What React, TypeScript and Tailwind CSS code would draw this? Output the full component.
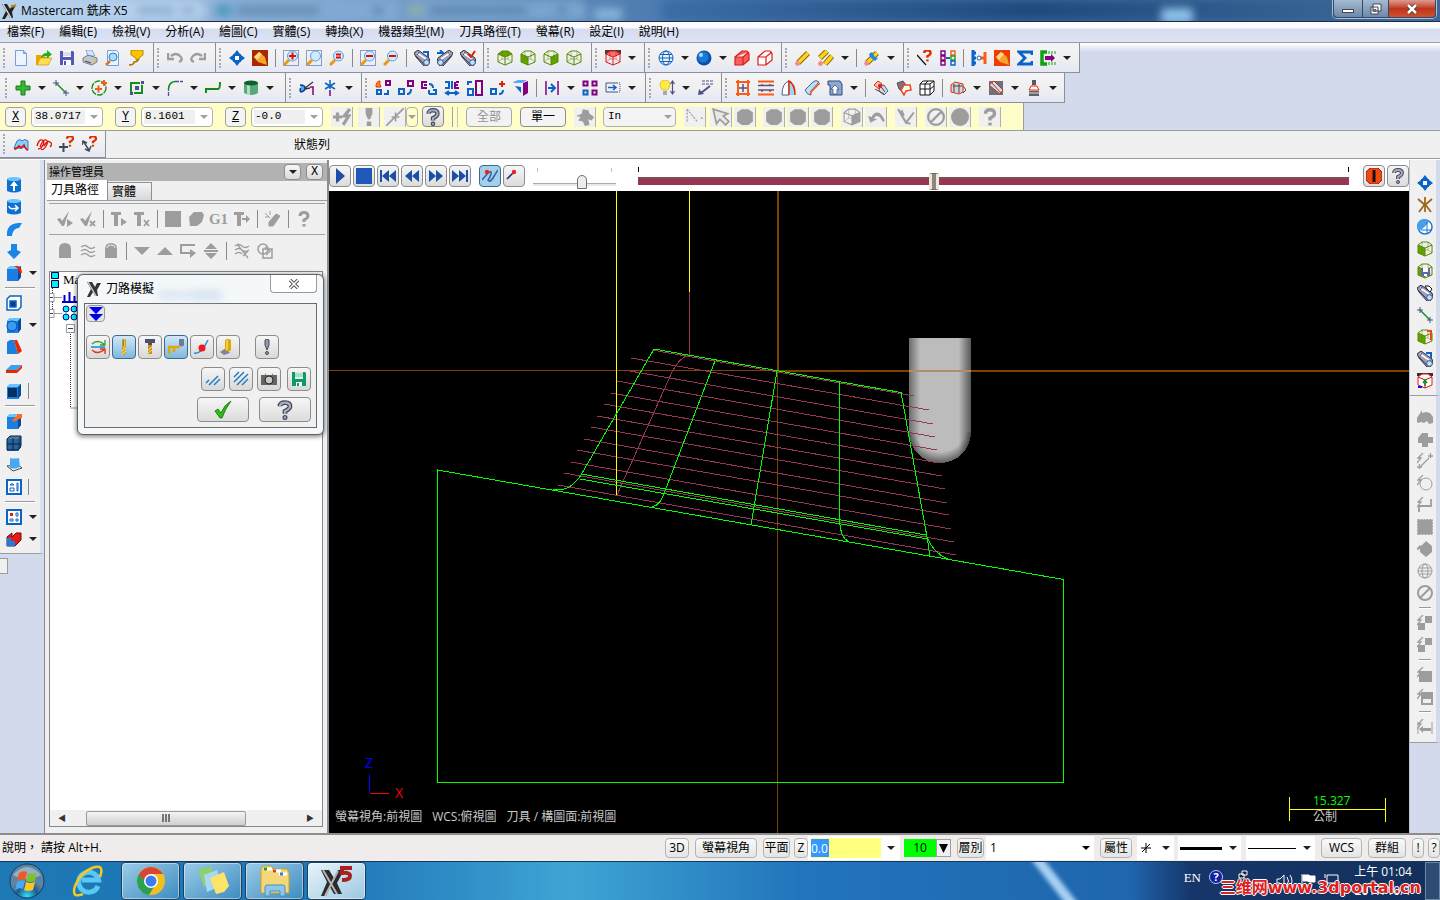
import type { ReactNode } from "react"

import { useState } from "react"
import clsx from "clsx"

const GRAY = "#9d9d9d"
const BLUE = "#0a64c8"
const PURPLE = "#800080"
const ORANGE = "#ff5a14"

const cube = "M1 4l4-3h6l4 3v8l-7 3-7-3zM1 4l7 3 7-3M8 7v8"

const Cube = ({ color = "#5a8a00", fill = "", face = "" }) => (
  <>
    {face && <path d={face} fill={fill || "#62a300"} />}
    <path d={cube} fill="none" stroke={color} strokeWidth="1" />
    <path d="M5 1v8l-4 3M5 9l6 0 4 3M11 1v8" fill="none" stroke={color} strokeWidth="0.5" />
  </>
)

const Lens = ({ color = "#e01000", sign = "", dashed = false }) => (
  <>
    {dashed && <path d="M.5.5h15v15H.5z" fill="none" stroke="#1848b0" strokeDasharray="1 1" />}
    <path d="M1 15l5-5" stroke="#e89a10" strokeWidth="3" />
    <circle cx="9.5" cy="6" r="5" fill="#cfeaff" stroke="#5aa0d8" />
    <path d={sign} stroke={color} strokeWidth="2" />
  </>
)

const Spyglass = ({ mark }: { mark?: ReactNode }) => (
  <>
    <path d="M0 3l4-3 11 8 1 4-3 4h-3L2 7z" fill="#9a9eb8" stroke="#2c2f40" />
    <path d="M3 3l9 6" stroke="#fff" strokeWidth="1.600" />
    <path d="M2 6l8 8M5 2L3 5" stroke="#44485c" />
    <circle cx="12.500" cy="12.500" r="2.800" fill="#bfe2ff" stroke="#3d5a86" />
    {mark}
  </>
)

const Solid = ({ children }: { children?: ReactNode }) => (
  <>
    <path d="M1 4l3-3h11v11l-3 4H1z" fill="#1a7fe0" />
    <path d="M1 4l3-3h11l-3 3z" fill="#6cc4ff" />
    <path d="M12 4l3-3v11l-3 4z" fill="#0a4a9c" />
    {children}
  </>
)

const Bolt = () => <path d="M6 0L1 5h3L0 10" fill="none" stroke={GRAY} strokeWidth="1.3" />

const Help = ({ color = "#e03000" }) => (
  <>
    <path d="M4 5q0-3.500 4-3.500t4 3.500q0 2-4 4v2" fill="none" stroke={color} strokeWidth="3" />
    <path d="M6.500 13h3v2.500h-3z" fill={color} />
  </>
)

const Pencil = ({ d = "M3 13L13 3" }) => (
  <>
    <path d={d} stroke="#8a6400" strokeWidth="5.500" />
    <path d={d} stroke="#ffd21e" strokeWidth="3.500" />
    <path d="M1 15l3-3" stroke="#f58a8a" strokeWidth="4" />
  </>
)

const Move = () => (
  <>
    <path d="M8 0l3 4H5zM8 16l3-4H5zM0 8l4-3v6zM16 8l-4-3v6z" fill={BLUE} />
    <path d="M5 5h6v6H5z" fill="#fff" stroke={BLUE} strokeWidth="2" />
  </>
)

const Brush = ({ bg = "#f03c00" }) => (
  <>
    <path d="M0 0h16v16H0z" fill={bg} />
    <path d="M2 7l5-5 6 5 2 8-9-3z" fill="#f5a52c" />
    <path d="M2 7l5-5 3 2-5 6z" fill="#ffd68a" />
  </>
)

// [outline squares, filled arrow] pairs used by the transform commands
const Xform = ({ a, b }: { a: string; b: string }) => (
  <>
    <path d={a} fill="none" stroke={PURPLE} strokeWidth="2" />
    <path d={b} fill="none" stroke={BLUE} strokeWidth="2" />
  </>
)

const icons: Record<string, ReactNode> = {
  new: (
    <>
      <path d="M2.500.500h8l3 3v12h-11z" fill="#eaf5ff" stroke="#6f9fe0" />
      <path d="M10.500.500v3h3" fill="#8fc0f5" stroke="#6f9fe0" />
    </>
  ),
  open: (
    <>
      <path d="M0 5h5l2 2h6v8H0z" fill="#e8a800" />
      <path d="M1 15l3-7h12l-4 7z" fill="#ffdf50" stroke="#c48800" strokeWidth=".6" />
      <path d="M5 8q1-5 6-5V0l5 4.500L11 8V6Q8 6 5 8z" fill="#1fae1f" />
    </>
  ),
  save: (
    <>
      <path d="M1 1h13l1 1v13H1z" fill="#5656b4" />
      <path d="M4 1h8v6H4zM4 10h8v5H4z" fill="#fff" />
      <path d="M4 3h8M4 5h8" stroke="#b8b8d8" />
      <path d="M5 11h2v4H5z" fill="#5656b4" />
    </>
  ),
  print: (
    <>
      <path d="M4 0h6l3 6H6z" fill="#cfe6ff" stroke="#7795c0" strokeWidth=".8" />
      <path d="M1 8l5-3 9 3v4l-5 3-9-3z" fill="#c3c3cc" stroke="#66667a" strokeWidth=".8" />
      <path d="M3 11l6 2" stroke="#444" />
      <path d="M12 11h2" stroke="#e8c000" strokeWidth="1.500" />
    </>
  ),
  preview: (
    <>
      <path d="M2.500.500h9l2 2v13h-11z" fill="#eaf5ff" stroke="#6f9fe0" />
      <path d="M1 15l4-4" stroke="#e07020" strokeWidth="2.500" />
      <circle cx="8" cy="7" r="4" fill="#a8dcff" stroke="#3d7ec0" />
    </>
  ),
  funnel: (
    <>
      <path d="M3 0h12v5l-4 3v2H8V8L3 5z" fill="#ffc400" stroke="#a87400" strokeWidth=".8" />
      <path d="M10 9q0 3-4 3 0 3-5 3" fill="none" stroke="#a87400" strokeWidth="1.500" />
    </>
  ),
  undo: <path d="M4 6q5-4 9 0t-1 6M1 3v6h6" fill="none" stroke={GRAY} strokeWidth="2.400" />,
  redo: <path d="M12 6q-5-4-9 0t1 6M15 3v6H9" fill="none" stroke={GRAY} strokeWidth="2.400" />,
  move: <Move />,
  repaint: <Brush bg="#a82800" />,
  zoomIn: <Lens dashed sign="M6 6h7M9.500 2.500v7" />,
  zoomWin: <Lens dashed />,
  zoomEq: <Lens sign="M7 4.500h5M7 7.500h5" />,
  zoomOutWin: <Lens dashed sign="M6 6h7" />,
  zoomOut: <Lens sign="M6 6h7" />,
  spy1: <Spyglass mark={<path d="M9 2h5v5" fill="none" stroke={BLUE} strokeWidth="2" />} />,
  spy2: (
    <g transform="matrix(-1 0 0 1 16 0)">
      <Spyglass mark={<path d="M16 3h-6l3-3" fill="none" stroke={BLUE} strokeWidth="2" />} />
    </g>
  ),
  spy3: <Spyglass mark={<path d="M8 4l3 3 4-6" fill="none" stroke="#e02000" strokeWidth="2" />} />,
  spy4: <Spyglass mark={<path d="M8 1h4l3 3-2 3-3-3z" fill="#fff" stroke="#111" />} />,
  cubeTop: <Cube face="M1 4l4-3h6l4 3-7 3z" />,
  cubeLeft: <Cube face="M1 4l7 3v8l-7-3z" />,
  cubeRight: <Cube face="M15 4l-7 3v8l7-3z" />,
  cubeWire: <Cube />,
  cubeRed: (
    <>
      <path d="M0 0h16v4H0z" fill="#4a3a3a" />
      <Cube color="#d81818" fill="#ff6a6a" face="M1 4l4-3h6l4 3-7 3z" />
    </>
  ),
  wireSphere: (
    <g fill="none" stroke={BLUE}>
      <circle cx="8" cy="8" r="7" />
      <ellipse cx="8" cy="8" rx="3.500" ry="7" />
      <path d="M1 8h14M2 4.500h12M2 11.500h12" />
    </g>
  ),
  sphere: (
    <>
      <circle cx="8" cy="8" r="7.500" fill="#0a50a8" />
      <circle cx="7" cy="7" r="5.500" fill="#1a78d8" />
      <circle cx="5" cy="5" r="2" fill="#a8dcff" />
    </>
  ),
  boxRed: (
    <path
      d="M1 7l7-6h5l2 3v6l-6 5H1zM1 7h8l6-5M9 7v8"
      fill="#f86060"
      stroke="#e01818"
      strokeWidth="1.200"
    />
  ),
  boxWhite: (
    <path
      d="M1 7l7-6h5l2 3v6l-6 5H1zM1 7h8l6-5M9 7v8"
      fill="#fff"
      stroke="#e01818"
      strokeWidth="1.200"
    />
  ),
  pencil: <Pencil />,
  pencils: (
    <>
      <Pencil d="M2 8l7-7" />
      <Pencil d="M7 14l7-8" />
    </>
  ),
  pencilBlue: (
    <>
      <Pencil />
      <path d="M5 4l3-2 3 5 3 1-3 3-5-4z" fill="#1a8ae0" />
    </>
  ),
  lineHelp: (
    <>
      <path d="M0 5l9 10" stroke="#111" strokeWidth="1.200" />
      <g transform="translate(4 -1) scale(.8)">
        <Help />
      </g>
    </>
  ),
  chainCols: (
    <>
      <path d="M1 1h4v4H1zM1 6h4v4H1zM1 11h4v4H1z" fill="none" stroke={PURPLE} strokeWidth="1.400" />
      <path d="M11 1h4v4h-4z" fill="none" stroke="#f06020" strokeWidth="1.400" />
      <path d="M11 6h4v4h-4z" fill="none" stroke="#20a020" strokeWidth="1.400" />
      <path d="M11 11h4v4h-4z" fill="none" stroke={BLUE} strokeWidth="1.400" />
      <path d="M6 8h4" stroke={BLUE} strokeWidth="2" />
    </>
  ),
  gears: (
    <>
      <path d="M2 0v16M2 3h3M2 8h3M2 13h3" stroke={BLUE} strokeWidth="3" />
      <path d="M14 2v12M9 8h5" stroke={ORANGE} strokeWidth="3" />
      <circle cx="8" cy="8" r="2" fill="#fff" stroke={BLUE} />
    </>
  ),
  brush: <Brush />,
  sigma: <path d="M15 5V2H2l6 6-6 6h13v-3" fill="none" stroke={BLUE} strokeWidth="2.800" />,
  bracket: (
    <>
      <path d="M7 2H2v12h5" fill="none" stroke="#10a010" strokeWidth="3.500" />
      <path d="M9 1v3M12 1v3M15 1v3M9 12v3M12 12v3M15 12v3" stroke="#10a010" />
      <path d="M5 6h6V4l4 4-4 4v-2H5z" fill={PURPLE} />
    </>
  ),
  plus: (
    <path
      d="M6 1h4v5h5v4h-5v5H6v-5H1V6h5z"
      fill="#35b835"
      stroke="#1a7a1a"
    />
  ),
  line: (
    <>
      <path d="M3 3l10 10" stroke="#10901c" strokeWidth="1.400" />
      <path d="M0 3h6M3 0v6M10 13h6M13 10v6" stroke="#50508c" />
    </>
  ),
  circle: (
    <>
      <circle cx="8" cy="8" r="7" fill="none" stroke="#10901c" strokeWidth="1.400" strokeDasharray="6 1" />
      <path d="M4 9h7M7.500 5.500v7M10 3h6M13 0v6" stroke="#f06020" strokeWidth="2" />
    </>
  ),
  rect: (
    <>
      <path d="M11 3H2v9M5 13h8V5" fill="none" stroke="#10901c" strokeWidth="2" />
      <path d="M6 6h4v4H6zM12 1h3v3h-3zM1 12h3v3H1z" fill="#50508c" />
    </>
  ),
  fillet: (
    <>
      <path d="M1.500 16V9M8 1.500h8" stroke="#50508c" strokeWidth="1.300" strokeDasharray="4 1" />
      <path d="M1.500 9Q2 2 8 1.500" fill="none" stroke="#10901c" strokeWidth="1.600" />
    </>
  ),
  spline: <path d="M1 13V9h12q2 0 2-7" fill="none" stroke="#108a18" strokeWidth="2" />,
  cylinder: (
    <>
      <path d="M1 3h14v10q-7 4-14 0z" fill="#58a878" />
      <path d="M4 4h3v11H4z" fill="#b0e0c0" />
      <ellipse cx="8" cy="3" rx="7" ry="2.500" fill="#0d6030" />
    </>
  ),
  trim: (
    <>
      <path d="M1 5q5 0 5 3t-4 4q-2-2 0-4" fill="#5aa8f8" stroke="#0a3c8c" strokeWidth="1.500" />
      <path d="M6 8l8-6M6 9l5-1" stroke="#334" strokeWidth="1.300" />
      <path d="M11 7h3v8" fill="none" stroke={PURPLE} strokeWidth="1.500" />
    </>
  ),
  breakPt: (
    <>
      <path d="M8 0v9M3 3l10 6M13 3L3 9" stroke={BLUE} strokeWidth="1.500" />
      <path d="M8 10v6" stroke={PURPLE} strokeWidth="1.500" />
    </>
  ),
  xf1: (
    <>
      <Xform a="M11 1h4v4h-4z" b="M2 10h4v4H2zM9 14h4v-4" />
      <path d="M1 7q0-6 4-6-1 3 1 6z" fill="#ff8a10" stroke="#e83000" />
    </>
  ),
  xf2: <Xform a="M10 1h5v5h-5z" b="M1 9h5v5H1zM9 14q4 0 4-5" />,
  xf3: <Xform a="M6 2H1v6h5M3 5h3" b="M8 14h7v-4h-3M8 14v-4M8 4q4 0 4 4" />,
  xf4: <Xform a="M11 2v6h4M11 5h3M15 2h-3" b="M1 2h4v6H1M8 1v8M2 13h12M5 11l-3 2 3 2M11 11l3 2-3 2" />,
  xf5: <Xform a="M9 1h6v14H9z" b="M1 9h5v6H1zM1 5V2h4" />,
  xf6: (
    <>
      <path d="M9 4h6M12 1v6" stroke="#e02000" strokeWidth="2" />
      <Xform a="" b="M1 9h5v5H1zM9 14q4 0 4-4" />
    </>
  ),
  xf7: (
    <>
      <path d="M10 3l5-2v12l-5 3z" fill={PURPLE} />
      <path d="M0 2l5-2h9l-5 3H1z" fill="#5aa8f8" />
      <path d="M2 6l6 1v6z" fill={BLUE} />
    </>
  ),
  offset: (
    <>
      <path d="M2 1v14M14 1v14" stroke={PURPLE} strokeWidth="1.500" />
      <path d="M4 8h6M7 4l4 4-4 4" fill="none" stroke={BLUE} strokeWidth="2" />
    </>
  ),
  grid4: (
    <>
      <path d="M1.500 1.500h4v4h-4zM10.500 1.500h4v4h-4zM10.500 10.500h4v4h-4z" fill="none" stroke={PURPLE} strokeWidth="2" />
      <path d="M1.500 10.500h4v4h-4z" fill="none" stroke={BLUE} strokeWidth="2" />
    </>
  ),
  stretch: (
    <>
      <path d="M12 3H1v9h11" fill="none" stroke="#50508c" />
      <path d="M12 3h3v9h-3" fill="none" stroke="#50508c" strokeDasharray="1 1" />
      <path d="M3 7.500h8M8 5l3 2.500L8 10" fill="none" stroke={BLUE} strokeWidth="1.500" />
    </>
  ),
  bulb: (
    <>
      <path d="M1 5q0-5 5-5t5 5q0 2-2.500 5h-5Q1 7 1 5z" fill="#ffe84a" stroke="#d8b000" strokeWidth=".7" />
      <path d="M4 11h4v4H4z" fill="#aaa" />
      <path d="M13.500 1v13M11.500 4l2-3 2 3M11.500 11l2 3 2-3" fill="none" stroke="#50508c" strokeWidth="1.200" />
    </>
  ),
  note: (
    <>
      <path d="M5 1h11M5 4h11" stroke="#50508c" strokeDasharray="3 1" />
      <path d="M13 6l-9 7" stroke="#50508c" strokeWidth="2" />
      <path d="M1 15l1-6 5 5z" fill="#50508c" />
    </>
  ),
  planes: (
    <>
      <path d="M1 2h14M1 14h14M3 0v16M13 0v16" stroke={ORANGE} strokeWidth="2" />
      <path d="M4 8h8M8 4v8" stroke="#50508c" strokeWidth="1.500" />
    </>
  ),
  rails: (
    <>
      <path d="M0 1.500h16M0 14.500h16M4 4v2M12 4v2M4 10v2M12 10v2" stroke={ORANGE} strokeWidth="2" />
      <path d="M0 5.500h16M0 10h16" stroke="#50508c" strokeWidth="1.500" />
    </>
  ),
  sail: (
    <>
      <path d="M1 15q0-12 7-14v14z" fill="#fff" stroke="#50608c" />
      <path d="M8 1q6 3 6 14H8z" fill="#9ad4f8" />
      <path d="M8 15V1q6 3 6 14" fill="none" stroke="#e02000" strokeWidth="1.400" />
    </>
  ),
  tube: (
    <>
      <path d="M1 10L9 2q3-3 6 0L7 11q-1 2 0 4-4 0-6-5z" fill="#b8e0f8" stroke="#50608c" />
      <path d="M7 15q-1-2 1-4l8-8" fill="none" stroke={ORANGE} strokeWidth="1.500" />
    </>
  ),
  upBox: (
    <>
      <path d="M1 1h12l2 3v11H3V5H1z" fill="#8aa8d0" stroke="#304878" />
      <path d="M8 5l4 4h-2v5H6V9H4z" fill="#fff" stroke="#304878" strokeWidth=".7" />
    </>
  ),
  surfA: (
    <>
      <path d="M1 5l4-4 4 3-3 5z" fill="#f4c8b8" stroke="#e02800" />
      <path d="M7 6l4-1 4 6-4 4-5-4z" fill="#c8dcec" stroke="#50608c" />
      <path d="M2 9l9 5M6 4l6 8" stroke="#803020" />
      <circle cx="7" cy="6" r="2" fill="#e02000" />
    </>
  ),
  surfB: (
    <>
      <path d="M1 3l6-2 3 4-4 6-3-2z" fill="#7d7080" stroke="#555" />
      <path d="M8 5l6 0 1 5-5 1-2 4-3-5z" fill="#fff" stroke="#e84818" strokeWidth="1.500" />
    </>
  ),
  gridBox: (
    <>
      <path d="M1 4l3-3h11v10l-4 4H1z" fill="#fff" stroke="#111" />
      <path d="M1 4h10v11M11 4l4-3M6 4v11M1 9h10l4-3M6 4l3-3" fill="none" stroke="#111" />
    </>
  ),
  surfC: (
    <>
      <path d="M1 5l4-3 8 2v8l-4 2-8-2z" fill="#bcdcf0" stroke="#e02800" />
      <path d="M3 6h9M4 4v8M9 4v9M13 6l3 4-3 3" fill="none" stroke="#803020" />
    </>
  ),
  surfD: (
    <>
      <path d="M1 1h14v14H1z" fill="#707078" />
      <path d="M1 5l5-4 9 9-3 4z" fill="#bce4f8" stroke="#e02800" />
      <path d="M4 3l9 10" stroke="#e02800" />
    </>
  ),
  spindle: (
    <>
      <path d="M6 0h4v5H6z" fill="#555a68" />
      <path d="M5 6h6l2 4H3z" fill="#fff" stroke="#e02800" />
      <path d="M3 11h10v5H3z" fill="#606068" />
      <path d="M3 13h10" stroke="#ddd" />
    </>
  ),
  // disabled ribbon glyphs
  fastPoint: <path d="M0 8h8M4 4v8M15 1l-5 6h4l-5 8" fill="none" stroke={GRAY} strokeWidth="2.800" />,
  bang: <path d="M5 0h6v5L9 10H7L5 5zM6 12h4v4H6z" fill={GRAY} />,
  lineGray: <path d="M0 16L16 0M5 8h7M8.500 4v8" fill="none" stroke={GRAY} strokeWidth="1.500" />,
  helpDark: (
    <>
      <path d="M4 5q0-3 4-3t4 3q0 2-4 4v2" fill="none" stroke="#44485c" strokeWidth="3.800" />
      <path d="M4 5q0-3 4-3t4 3q0 2-4 4v2" fill="none" stroke="#a8acbc" strokeWidth="1.800" />
      <circle cx="8" cy="14" r="1.500" fill="#a8acbc" stroke="#44485c" />
    </>
  ),
  helpGray: <Help color={GRAY} />,
  flower: <path d="M0 7l5-2 1-4 5 1 1 3 4 3-2 3-3-1 1 5-4 1-2-4-4-1 2-3z" fill={GRAY} />,
  dashes: <path d="M1 1v12M1 1l9 11M13 9h3" fill="none" stroke={GRAY} strokeDasharray="2 1" />,
  pointer: <path d="M1 1l3 13 3-4 5 5 3-3-5-5 4-2z" fill="#e8e8e8" stroke={GRAY} strokeWidth="1.500" />,
  disc: <path d="M1 4l4-3h6l4 3v8l-4 3H5l-4-3z" fill={GRAY} />,
  halfCube: <Cube color={GRAY} fill={GRAY} face="M15 4l-7 3v8l7-3z" />,
  backArrow: <path d="M1 7l2 6 6-3-3-1q3-4 6 0l2 3h2Q13 3 8 4 5 5 4 8z" fill={GRAY} />,
  vee: <path d="M1 1l7 12 7-9M4 2l2 5M8 13l4 1" fill="none" stroke={GRAY} strokeWidth="1.800" />,
  ban: <path d="M8 1a7 7 0 100 14A7 7 0 008 1zM3 13L13 3" fill="none" stroke={GRAY} strokeWidth="2" />,
  bigDisc: <circle cx="8" cy="8" r="8" fill={GRAY} />,
  surfBlue: (
    <>
      <path d="M1 12l3-7q3-3 5 0 3-3 6 0v9l-4-3q-3 3-5 1z" fill="#8cd0f8" stroke="#2878c8" />
      <path d="M1 13q3 0 5-3 2 3 5-1 2 5 4 5" fill="none" stroke="#e01000" strokeWidth="1.600" />
    </>
  ),
  surfRed: (
    <path
      d="M1 10q2-7 5-6t1 5-5 4M4 11q3-8 6-7t0 6-5 3M8 10q3-6 6-4t0 5"
      fill="none"
      stroke="#e01000"
      strokeWidth="1.300"
    />
  ),
  plusHelp: (
    <>
      <path d="M0 11h9M4.500 7v9" stroke="#44485c" strokeWidth="2" />
      <g transform="translate(5 -1) scale(.75)">
        <Help />
      </g>
    </>
  ),
  arrowHelp: (
    <>
      <path d="M1 5l6 9M0 9l1-4 4 2M9 10l-2 5-4-2" fill="none" stroke="#44485c" strokeWidth="1.500" />
      <g transform="translate(5 -1) scale(.75)">
        <Help />
      </g>
    </>
  ),
  // solids bar
  extrude: (
    <>
      <path d="M1 2q7-3 14 0v12q-7 3-14 0z" fill="#0d6fd0" />
      <ellipse cx="8" cy="2" rx="7" ry="2" fill="#6cc4ff" />
      <path d="M8 4l4 5H9v5H7V9H4z" fill="#fff" />
    </>
  ),
  revolve: (
    <>
      <path d="M1 2q7-3 14 0v12q-7 3-14 0z" fill="#0d6fd0" />
      <ellipse cx="8" cy="2" rx="7" ry="2" fill="#6cc4ff" />
      <path d="M3 7q0 4 8 2M9 6l3 3-3 3" fill="none" stroke="#fff" strokeWidth="1.500" />
    </>
  ),
  sweep: <path d="M1 15Q0 3 12 2h4l-3 5q-6 0-7 8z" fill="#1a86e8" />,
  loft: <path d="M5 1h6v6l4 2-7 7-7-7 4-2z" fill="#1a86e8" />,
  filletSolid: (
    <Solid>
      <path d="M8 1h4q4 2 4 7h-3q0-5-5-7z" fill="#e82000" />
    </Solid>
  ),
  shell: (
    <>
      <path d="M1 4l3-3h11v11l-3 3H1z" fill="#fff" stroke={BLUE} strokeWidth="1.500" />
      <path d="M4 6h6v6H4z" fill="#0d3c80" stroke={BLUE} strokeWidth="1.500" />
    </>
  ),
  boolean: (
    <Solid>
      <circle cx="6" cy="9" r="5" fill="#3a9cf0" stroke="#0a4a9c" />
    </Solid>
  ),
  draft: (
    <>
      <path d="M1 3l3-2h4l4 14H1z" fill="#1a7fe0" />
      <path d="M8 1h3l5 11-4 3z" fill="#e82800" />
    </>
  ),
  slab: (
    <>
      <path d="M0 9l5-5h11l-5 5z" fill="#3aa0f0" />
      <path d="M0 9h11l5-5v3l-5 5H0z" fill="#e82800" />
    </>
  ),
  darkBox: (
    <Solid>
      <path d="M2 5h9v9H2z" fill="#06305e" />
    </Solid>
  ),
  push: (
    <Solid>
      <path d="M6 7l5-4V1h5v4l-3 1-5 3z" fill="#ff6a20" />
    </Solid>
  ),
  quad: (
    <Solid>
      <path d="M1 4l3-3h11v10l-3 4H1zM1 9h14M7 3v12" fill="#34506c" fillOpacity=".6" stroke="#08203c" />
    </Solid>
  ),
  sheet: (
    <>
      <path d="M1 9l6 5 9-3-4-3z" fill="#fff" stroke="#444" />
      <path d="M4 1q4 1 9 0l1 9q-5 3-10 1z" fill="#48a8f0" />
    </>
  ),
  views: (
    <>
      <path d="M1 1h14v14H1z" fill="#fff" stroke={BLUE} strokeWidth="2" />
      <path d="M4 6q2-3 4 0zM4 9h4v3H4zM11 4h1v8h-1z" fill="none" stroke={BLUE} />
    </>
  ),
  pattern: (
    <>
      <path d="M1 1h14v14H1z" fill="#fff" stroke={BLUE} strokeWidth="2" />
      <path d="M4 4h3v3H4z" fill="#e02000" />
      <path d="M10 4h2v3h-2zM4 10h3v2H4zM10 10h2v2h-2z" fill="none" stroke={BLUE} />
    </>
  ),
  notch: (
    <>
      <path d="M1 6l5-4v4l4-4 5 0v7l-6 6H1z" fill="#e81818" stroke="#700808" />
      <path d="M1 7h4v3h4v5H1z" fill="#1a7fe0" />
    </>
  ),
  // view bar
  tripod: <path d="M8 0v15M1 2l7 6 7-6M8 7L2 15M8 7l6 8" fill="none" stroke="#a0661c" strokeWidth="1.800" />,
  globe: (
    <>
      <circle cx="8" cy="8" r="7" fill="#fff" stroke="#1a78d0" strokeWidth="1.500" />
      <path d="M2 12A7 7 0 0112 2Q9 8 2 12z" fill="#4aa0e8" />
      <path d="M10 3v11M4 11h11" stroke="#1a78d0" />
    </>
  ),
  cubeSave: (
    <>
      <Cube face="M1 4l7 3v8l-7-3z" />
      <path d="M4 5h9v8H4z" fill="#6464b4" />
      <path d="M6 5h5v4H6zM7 11h3v2H7z" fill="#fff" />
    </>
  ),
  cubeMag: (
    <>
      <Cube face="M1 4l7 3v8l-7-3z" />
      <path d="M10 2h4v9" fill="none" stroke="#e84a10" strokeWidth="2" />
    </>
  ),
  cubeAxes: (
    <>
      <path d="M0 0h16v3H0z" fill="#333" />
      <path d={cube} fill="#fff" stroke="#e01818" />
      <path d="M8 13V8M6 10l2-3 2 3" fill="none" stroke="#10901c" strokeWidth="1.500" />
      <path d="M1 14h4" stroke="#1010e0" strokeWidth="2" />
    </>
  ),
  gBlob: <path d="M0 13V9l5-8v3l4-1 4 1 3 4v6l-4 1-2-3-3 2-3-1-3 1z" fill={GRAY} />,
  gPlus: <path d="M5 2h6v4h5v6h-5v4H5v-4H1V7z" fill={GRAY} />,
  gLine: (
    <>
      <Bolt />
      <path d="M4 13l8-8M0 14h5M2.500 11v5M11 3h5M13.500 0v5" stroke={GRAY} strokeWidth="1.300" />
    </>
  ),
  gCircle: (
    <>
      <Bolt />
      <circle cx="9" cy="9" r="6" fill="none" stroke={GRAY} />
    </>
  ),
  gSpline: (
    <>
      <Bolt />
      <path d="M2 15V9h12V2" fill="none" stroke={GRAY} strokeWidth="1.800" />
    </>
  ),
  gSquare: (
    <>
      <path d="M1 1h14v14H1z" fill={GRAY} />
      <path d="M.5.5h15v15H.5z" fill="none" stroke={GRAY} strokeDasharray="2 1" />
    </>
  ),
  gHex: <path d="M0 7l3-3 1 1 5-5 6 5v6l-6 5-6-5V8l-3 1z" fill={GRAY} />,
  gGlobe: (
    <g fill="none" stroke={GRAY}>
      <circle cx="8" cy="8" r="7" />
      <ellipse cx="8" cy="8" rx="3" ry="7" />
      <path d="M1 8h14M2 5h12M2 11h12" />
    </g>
  ),
  gPair: (
    <>
      <Bolt />
      <path d="M8 1h7v7H8zM1 8h7v7H1z" fill={GRAY} />
    </>
  ),
  gBox: (
    <>
      <Bolt />
      <path d="M2 4h13v11H2z" fill={GRAY} />
    </>
  ),
  gForm: (
    <>
      <Bolt />
      <path d="M4 3h12v13H4z" fill={GRAY} />
      <path d="M6 10h8v4H6z" fill="#f0f0f0" />
    </>
  ),
  gDim: (
    <>
      <Bolt />
      <path d="M1 3v12M15 3v12" stroke={GRAY} />
      <path d="M2 10l4-3v2h8v3H6v2z" fill={GRAY} />
    </>
  ),
  // operations manager
  check: (
    <>
      <path d="M0 8l3-1 2 3 7-10-5 15H5z" fill={GRAY} />
      <path d="M10 8l6 4-6 4z" fill={GRAY} />
    </>
  ),
  checkX: (
    <>
      <path d="M0 8l3-1 2 3 7-10-5 15H5z" fill={GRAY} />
      <path d="M10 10l5 5M15 10l-5 5" stroke={GRAY} strokeWidth="1.800" />
    </>
  ),
  tPlay: <path d="M0 1h10v3H7v11H3V4H0zM10 7l6 4-6 4z" fill={GRAY} />,
  tX: (
    <>
      <path d="M0 1h10v3H7v11H3V4H0z" fill={GRAY} />
      <path d="M10 9l5 6M15 9l-5 6" stroke={GRAY} strokeWidth="1.800" />
    </>
  ),
  block: <path d="M0 0h16v16H0z" fill={GRAY} />,
  blob: <path d="M1 6l5-5h8l2 3-2 7-5 4H2z" fill={GRAY} />,
  tArrow: <path d="M0 1h10v3H7v11H3V4H0zM8 7h4V4l4 4-4 4V9H8z" fill={GRAY} />,
  eraser: (
    <>
      <path d="M4 11l7-8 4 2-7 10H4z" fill={GRAY} stroke={GRAY} />
      <path d="M0 2l5 5M5 0v4M0 6h4" stroke={GRAY} />
    </>
  ),
  lock: <path d="M2 6q0-6 6-6t6 6v9H2z" fill={GRAY} />,
  waves: <path d="M1 4q4-3 7 0t7 0M1 8q4-3 7 0t7 0M1 12q4-3 7 0t7 0" fill="none" stroke={GRAY} strokeWidth="1.400" />,
  lockOpen: (
    <>
      <path d="M2 6q0-6 6-6t6 6v9H2z" fill={GRAY} />
      <path d="M4 5q0-3 4-3t4 3" fill="none" stroke="#eee" />
    </>
  ),
  down: <path d="M0 4h16l-8 8z" fill={GRAY} />,
  up: <path d="M0 12h16L8 4z" fill={GRAY} />,
  loop: (
    <>
      <path d="M15 2H1v8h10" fill="none" stroke={GRAY} strokeWidth="2" />
      <path d="M10 6l6 4-6 5z" fill={GRAY} />
    </>
  ),
  updown: <path d="M2 6l6-6 6 6zM1 7h14v2H1zM2 10h12l-6 6z" fill={GRAY} />,
  wavesX: <path d="M1 3q4-3 7 0t7 0M1 7q4-3 7 0t7 0M1 11q4-3 7 0M3 1l11 14M9 13l5-5" fill="none" stroke={GRAY} strokeWidth="1.300" />,
  shapes: (
    <g fill="none" stroke={GRAY} strokeWidth="1.500">
      <circle cx="6" cy="6" r="5" />
      <path d="M6 6h9v9H6zM8 4l5 4-4 4" />
    </g>
  ),
  // backplot dialog
  swap: (
    <>
      <path d="M2 5q5-5 12 0M15 1v5h-5" fill="none" stroke="#30a030" strokeWidth="1.300" />
      <path d="M1 8h14" stroke="#1890e0" strokeWidth="1.600" />
      <path d="M2 11q5 5 12 0M15 15v-5h-5" fill="none" stroke="#e03010" strokeWidth="1.300" />
    </>
  ),
  drill: (
    <>
      <path d="M6 0h4v15l-2 1-2-1z" fill="#d8a010" />
      <path d="M7 0h1v8H7M10 9l-4 3M10 12l-4 3" stroke="#fff0a0" />
    </>
  ),
  holder: (
    <>
      <path d="M3 0h10v4h-3v2H6V4H3z" fill="#50506c" />
      <path d="M6 6h4v9H6z" fill="#c89010" />
      <path d="M10 8l-4 3M10 11l-4 3" stroke="#ffe890" />
    </>
  ),
  rapid: (
    <>
      <path d="M1 15V8h11M6 8v5" fill="none" stroke="#e0a800" strokeWidth="2.500" />
      <path d="M11 0h5v6q-2 3-5 0z" fill="#70789c" />
    </>
  ),
  endpoint: (
    <>
      <path d="M0 14q4 1 9-4l5-9" fill="none" stroke="#1890e0" strokeWidth="1.500" />
      <circle cx="8" cy="9" r="3.500" fill="#f01818" />
    </>
  ),
  shade: (
    <>
      <path d="M0 13l6-4 4 5-6 2z" fill="#8080a8" />
      <path d="M5 1q3-2 6 0v10q-3 3-6 0z" fill="#e0a800" />
      <path d="M7 1v10" stroke="#fff0a0" />
    </>
  ),
  options: (
    <>
      <path d="M6 1q2-2 4 0v5L8 11 6 6z" fill="#9298ac" stroke="#44485c" />
      <circle cx="8" cy="14" r="1.500" fill="#9298ac" stroke="#44485c" />
    </>
  ),
  hatch2: <path d="M4 14l9-9M9 14l6-6M1 12l3-3" stroke="#1878c0" strokeWidth="1.400" />,
  hatch3: <path d="M1 6l5-5M1 11L11 1M4 14L15 3M9 14l6-6" stroke="#1878c0" strokeWidth="1.400" />,
  camera: (
    <>
      <path d="M0 4h4l1-2h6l1 2h4v10H0z" fill="#66665e" />
      <circle cx="8" cy="9" r="4" fill="#c8c8c8" stroke="#222" />
      <path d="M5 2h6v2H5z" fill="#eee" />
    </>
  ),
  saveGreen: (
    <>
      <path d="M1 1h13l1 1v13H1z" fill="#109868" />
      <path d="M4 1h8v7H4z" fill="#d8f4e4" />
      <path d="M4 3h8M4 5h8" stroke="#78c8a4" />
      <path d="M5 11h6v4H5z" fill="#fff" />
      <path d="M6 12h2v3H6z" fill="#109868" />
    </>
  ),
  path: (
    <>
      <path d="M0 12l6-7q4-3 3 1t-3 6q2 3 5-2t5-8" fill="none" stroke="#3060a8" strokeWidth="1.500" />
      <circle cx="5" cy="4" r="2.200" fill="#f02020" />
    </>
  ),
  pin: (
    <>
      <path d="M1 11l6-6" stroke="#283078" strokeWidth="1.600" />
      <circle cx="8" cy="4" r="2.200" fill="#f02020" />
    </>
  ),
  play: <path d="M4 0l9 8-9 8z" fill="#1c4ea8" />,
  stop: <path d="M0 0h16v16H0z" fill="#2058b8" />,
  first: <path d="M0 2h2v12H0zM9 2v12L2 8zM16 2v12L9 8z" fill="#1c4ea8" />,
  rewind: <path d="M8 2v12L1 8zM15 2v12L8 8z" fill="#1c4ea8" />,
  forward: <path d="M1 2v12l7-6zM8 2v12l7-6z" fill="#1c4ea8" />,
  last: <path d="M0 2v12l7-6zM7 2v12l7-6zM14 2h2v12h-2z" fill="#1c4ea8" />,
  halt: (
    <>
      <path d="M4 0h8l4 4v8l-4 4H4l-4-4V4z" fill="#f04810" stroke="#a02000" />
      <path d="M6.500 2h3v12h-3z" fill="#111" />
    </>
  ),
}

const Icon = ({ name, className = "size-4" }: { name: string; className?: string }) => (
  <svg viewBox="0 0 16 16" className={clsx("shrink-0", className)} aria-hidden="true">
    {icons[name]}
  </svg>
)

const Caret = ({ className = "text-[#222]" }) => (
  <svg viewBox="0 0 8 4" className={clsx("w-2 h-1 shrink-0", className)} aria-hidden="true">
    <path d="M0 0h8L4 4z" fill="currentColor" />
  </svg>
)

const Tool = ({ name }: { name: string }) => {
  if (name == "|") return <span className="w-2 h-[18px] flex justify-center shrink-0"><i className="w-px bg-[#8a8a8a]" /></span>
  if (name == "v")
    return (
      <button className="w-[15px] h-6 flex items-center justify-center shrink-0" aria-label="more">
        <Caret />
      </button>
    )
  return (
    <button className="w-[23px] h-6 flex items-center justify-center shrink-0" aria-label={name}>
      <Icon name={name} />
    </button>
  )
}

const Group = ({ items, className }: { items: string; className: string }) => (
  <div
    className={clsx(
      "flex items-center border-r border-b border-[#8f8f96] bg-linear-to-b from-[#f4f4f8] via-[#f0f0f0] to-[#e4e8f6] shrink-0",
      className
    )}
  >
    <i className="w-0 h-5 ml-[3px] mr-1 border-l-2 border-dotted border-[#a8a8b0] shrink-0" />
    {items.split(" ").map((item, i) => (
      <Tool key={i} name={item} />
    ))}
  </div>
)

const menus = [
  "檔案(F)",
  "編輯(E)",
  "檢視(V)",
  "分析(A)",
  "繪圖(C)",
  "實體(S)",
  "轉換(X)",
  "機器類型(M)",
  "刀具路徑(T)",
  "螢幕(R)",
  "設定(I)",
  "說明(H)",
]

const TitleBar = () => (
  <header className="relative h-[22px] shrink-0 flex items-center overflow-hidden border-b border-[#1c2a44] bg-linear-to-r from-[#b9d3ec] via-[#4373aa] to-[#3c6898]">
    <div className="absolute inset-0 flex blur-xs" aria-hidden="true">
      <i className="w-[205px] bg-[#b4d0ec] rounded-r-xl" />
      <i className="w-[185px] ml-2 bg-[#7fa9d2] rounded-t-lg" />
      <i className="w-[180px] ml-2 bg-[#7aa3cd] rounded-t-lg" />
      <i className="w-7 ml-2 mt-2 bg-[#86b0d8]" />
      <i className="flex-1 mx-10 bg-linear-to-r from-[#3c6ea6] via-[#1f4a7e] to-[#3c6898]" />
    </div>
    <div className="absolute inset-y-2 left-0 right-0 flex blur-xs" aria-hidden="true">
      <i className="w-9 ml-[138px] bg-[#7a9cc0]" />
      <i className="w-3 ml-2 bg-[#7a9cc0]" />
      <i className="w-3 ml-6 bg-[#1a88a8]" />
      <i className="w-20 ml-2 bg-[#58809f]" />
      <i className="w-2 ml-14 bg-[#47719c]" />
      <i className="w-3 ml-7 bg-[#9cba7c]" />
      <i className="w-24 ml-2 bg-[#4c779f]" />
      <i className="w-2 ml-8 bg-[#47719c]" />
      <i className="w-8 ml-[595px] h-4 bg-[#8cc0e8] rounded" />
    </div>
    <svg viewBox="0 0 16 16" className="relative size-4 ml-px" aria-hidden="true">
      <path d="M1 1h5l3 5 2-4h4l-4 7 1 6H9l-2-4-3 5H1l4-8z" fill="#222" />
      <path d="M2 1l8 14" stroke="#ddd" strokeWidth="1.500" />
      <path d="M10 4l5-2" stroke="#b08a20" strokeWidth="2" />
    </svg>
    <h1 className="relative ml-1 text-xs">Mastercam 銑床 X5</h1>
    <div className="relative ml-auto mr-1 self-start flex h-[18px] rounded-b border border-t-0 border-[#33486a] shadow-[0_0_0_1px_#a8c0dc]">
      <button aria-label="minimize" className="w-[28px] flex items-end justify-center pb-1 rounded-bl bg-linear-to-b from-[#a4bad2] to-[#6d89a8]">
        <i className="w-3 h-1 bg-white border border-[#445]" />
      </button>
      <button aria-label="restore" className="w-[27px] flex items-center justify-center border-x border-[#33486a] bg-linear-to-b from-[#a4bad2] to-[#6d89a8]">
        <svg viewBox="0 0 12 12" className="size-3">
          <path d="M3 1h8v7H3zM1 4h7v7H1z" fill="#fff" stroke="#445" />
          <path d="M3 6.500h3v2H3z" fill="#6d89a8" stroke="#445" strokeWidth=".7" />
        </svg>
      </button>
      <button aria-label="close" className="w-[46px] flex items-center justify-center rounded-br bg-linear-to-b from-[#dc9c90] via-[#c0341c] to-[#d0502c]">
        <svg viewBox="0 0 12 12" className="size-3">
          <path d="M2 2l8 8M10 2l-8 8" stroke="#433" strokeWidth="4" />
          <path d="M2 2l8 8M10 2l-8 8" stroke="#fff" strokeWidth="2.500" />
        </svg>
      </button>
    </div>
  </header>
)

const Coord = ({ axis, value }: { axis: string; value: string }) => (
  <div className="flex items-center mr-3 shrink-0">
    <label
      htmlFor={"coord-" + axis}
      className="w-[21px] h-5 flex items-center justify-center rounded-sm border border-[#a0a0a0] bg-[#f4f4f4] font-['Liberation_Mono',monospace] text-xs underline"
    >
      {axis}
    </label>
    <span className="w-[72px] h-5 ml-[5px] flex items-center rounded-sm border border-[#b0b0b0] bg-white">
      <input
        id={"coord-" + axis}
        defaultValue={value}
        className="w-[51px] h-[14px] ml-0.5 pl-px bg-[#f0f0f0] font-['Liberation_Mono',monospace] text-[11px]"
      />
      <button aria-label={axis + " history"} className="flex-1 flex justify-center">
        <Caret className="text-[#a0a0a0]" />
      </button>
    </span>
  </div>
)

const Ghost = ({ name, className = "" }: { name: string; className?: string }) => (
  <button aria-label={name} disabled className={clsx("w-[22px] h-5 border-r border-[#b0b0b0] bg-[#f0f0f0] flex items-center justify-center shrink-0", className)}>
    <Icon name={name} className="size-[18px]" />
  </button>
)

const faceBtn = "rounded-sm border border-[#8c8c8c] bg-linear-to-b from-[#f6f6f6] to-[#dcdcdc] flex items-center justify-center shrink-0"

const Toolbars = () => (
  <>
    <nav className="h-[21px] shrink-0 flex items-center gap-[15px] pl-[7px] text-xs border-b border-[#9a9ca8] bg-linear-to-b from-[#fbfbfe] from-30% via-[#d6dcee] via-35% to-[#dde4f6]">
      {menus.map((m) => (
        <button key={m} className="shrink-0 whitespace-nowrap">
          {m}
        </button>
      ))}
    </nav>
    <div className="h-[30px] shrink-0 flex bg-linear-to-b from-white to-[#d3daec] to-30%">
      <Group className="w-[154px]" items="new open save print preview funnel" />
      <Group className="w-[62px]" items="undo redo" />
      <Group className="w-[268px]" items="move repaint | zoomIn zoomWin zoomEq | zoomOutWin zoomOut | spy1 spy2 spy3" />
      <Group className="w-[108px]" items="cubeTop cubeLeft cubeRight cubeWire" />
      <Group className="w-[53px]" items="cubeRed v" />
      <Group className="w-[137px]" items="wireSphere v sphere v boxRed boxWhite" />
      <Group className="w-[122px]" items="pencil pencils v | pencilBlue v" />
      <Group className="w-[176px]" items="lineHelp chainCols | gears brush sigma bracket v" />
    </div>
    <div className="h-[30px] shrink-0 flex bg-[#d3daec]">
      <Group className="w-[286px] pl-0.5" items="plus v line v circle v rect v fillet v spline v cylinder v" />
      <Group className="w-[76px]" items="trim breakPt v" />
      <Group className="w-[284px]" items="xf1 xf2 xf3 xf4 xf5 xf6 xf7 | offset v grid4 stretch v" />
      <Group className="w-[76px]" items="bulb v note" />
      <Group className="w-[343px]" items="planes rails sail tube upBox v | surfA surfB gridBox | surfC v surfD v spindle v" />
    </div>
    <div className="h-[28px] shrink-0 flex bg-[#d3daec] border-b border-[#9a9ca0]">
      <div className="w-[1024px] shrink-0 flex items-center pl-[5px] bg-[#fffec8] border-r border-[#9a9ca0]">
        <Coord axis="X" value="38.0717" />
        <Coord axis="Y" value="8.1601" />
        <Coord axis="Z" value="-0.0" />
        <Ghost name="fastPoint" className="-ml-1" />
        <Ghost name="bang" className="ml-[5px]" />
        <Ghost name="lineGray" className="ml-1" />
        <button aria-label="point style" className="w-3 h-5 border border-[#b0b0b0] rounded-sm flex items-center justify-center">
          <Caret className="text-[#a0a0a0]" />
        </button>
        <button aria-label="help" className={clsx(faceBtn, "w-[22px] h-[21px] ml-1")}>
          <Icon name="helpDark" className="size-[18px]" />
        </button>
        <i className="w-px h-5 ml-2 bg-[#a0a0a0]" />
        <i className="w-px h-5 ml-1 bg-[#c8c8a8]" />
        <button disabled className="w-[46px] h-5 ml-2 rounded-sm border border-[#a8a8a8] bg-[#f2f2f2] text-xs leading-4 text-[#909090]">全部</button>
        <button className="w-[46px] h-5 ml-2 rounded-sm border border-[#8c8c8c] bg-[#f4f4f4] text-xs leading-4">單一</button>
        <Ghost name="flower" className="ml-2" />
        <span className="relative ml-[7px] flex">
          <select aria-label="selection mode" className="appearance-none w-[73px] h-5 pl-1 rounded-sm border border-[#b0b0b0] bg-[#f4f4f4] font-['Liberation_Mono',monospace] text-[11px]">
            <option>In</option>
          </select>
          <Caret className="absolute right-1 top-2 text-[#a0a0a0]" />
        </span>
        <Ghost name="dashes" className="ml-2 w-9" />
        <Ghost name="pointer" className="ml-1" />
        <Ghost name="disc" className="ml-0.5" />
        <Ghost name="disc" className="ml-[7px]" />
        <Ghost name="disc" className="ml-0.5" />
        <Ghost name="disc" className="ml-0.5" />
        <Ghost name="halfCube" className="ml-2" />
        <Ghost name="backArrow" className="ml-0.5" />
        <Ghost name="vee" className="ml-2" />
        <Ghost name="ban" className="ml-2" />
        <Ghost name="bigDisc" className="ml-0.5" />
        <Ghost name="helpGray" className="ml-2" />
      </div>
    </div>
    <div className="h-[28px] shrink-0 flex border-b border-[#9a9ca0] bg-[#f0f0f0]">
      <Group className="w-[106px]" items="surfBlue surfRed plusHelp arrowHelp" />
      <p className="w-[412px] text-center text-xs leading-[28px]">狀態列</p>
    </div>
  </>
)

const SideTool = ({ name, wide }: { name: string; wide?: boolean }) => {
  if (name == "|") return <i className="h-0.5 my-[3px] mx-[5px] bg-white border-t border-[#9a9a9a] shrink-0" />
  const [icon, arrow] = name.split("+")
  return (
    <div className={clsx("h-[22px] flex items-center shrink-0", wide ? "pl-[6px]" : "justify-center")}>
      <button aria-label={icon}>
        <Icon name={icon} />
      </button>
      {arrow == "v" && <Caret className="ml-[7px] text-[#222]" />}
      {arrow == "l" && <i className="w-px h-4 ml-1.5 bg-[#8a8a8a]" />}
    </div>
  )
}

const LeftBar = () => (
  <aside className="w-[45px] shrink-0 flex flex-col bg-[#d3daec] border-r border-[#8a8a94]">
    <div className="flex flex-col pt-[14px] pb-[3px] border-b border-[#9a9ca0] border-r-4 border-r-[#d8e0f4] bg-[#f0f0f0]">
      {"extrude revolve sweep loft filletSolid+v | shell boolean+v draft slab darkBox+l | push quad sheet views+l | pattern+v notch+v"
        .split(" ")
        .map((n, i) => (
          <SideTool key={i} name={n} wide />
        ))}
    </div>
    <button aria-label="expand" className="w-2 h-4 mt-1 border border-l-0 border-[#9a9ca0] bg-[#f0f0f0]" />
  </aside>
)

const RightBar = () => (
  <aside className="w-[31px] shrink-0 flex flex-col bg-[#d3daec] border-l border-[#c0c4d0]">
    <div className="flex flex-col pt-3 pb-[3px] pl-1 border-b border-[#9a9ca0] border-r-4 border-r-[#d3daec] bg-[#f0f0f0]">
      {"move tripod globe cubeLeft cubeSave spy4 line cubeMag spy1 cubeAxes".split(" ").map((n) => (
        <SideTool key={n} name={n} />
      ))}
    </div>
    <div className="flex flex-col pt-[10px] pb-1 pl-1 border-b border-[#9a9ca0] border-r-4 border-r-[#d3daec] bg-[#f0f0f0]">
      {"gBlob gPlus gLine gCircle gSpline gSquare gHex gGlobe ban | gPair gPair | gBox gForm | gDim".split(" ").map((n, i) => (
        <SideTool key={i} name={n} />
      ))}
    </div>
  </aside>
)

const DialogBtn = ({ name, on, className = "w-6" }: { name: string; on?: boolean; className?: string }) => (
  <button
    aria-label={name}
    className={clsx(
      "h-6 rounded-sm border flex items-center justify-center shrink-0",
      on ? "border-[#3c6c8c] bg-linear-to-b from-[#d0e8f8] to-[#7fb8dc]" : "border-[#8c8c8c] bg-linear-to-b from-[#f6f6f6] to-[#d8d8d8]",
      className
    )}
  >
    <Icon name={name} />
  </button>
)

const Dialog = () => (
  <section
    role="dialog"
    aria-label="刀路模擬"
    className="absolute left-8 top-[114px] w-[247px] h-[161px] px-[6px] pb-[6px] flex flex-col rounded-md border border-[#5a6468] bg-[#f4f8fa] shadow-[0_1px_4px_1px_rgba(0,0,0,.45)]"
  >
    <header className="h-7 shrink-0 flex items-center">
      <svg viewBox="0 0 16 16" className="size-4 ml-0.5" aria-hidden="true">
        <path d="M1 1h5l3 5 2-4h4l-4 7 1 6H9l-2-4-3 5H1l4-8z" fill="#333" />
        <path d="M2 1l8 14" stroke="#ccc" strokeWidth="1.500" />
      </svg>
      <h2 className="ml-1 text-xs">刀路模擬</h2>
      <i className="w-8 h-2 ml-1 mt-3 bg-[#c4d8ec] blur-xs opacity-60" />
      <i className="w-8 h-2 mt-3 bg-[#c4d8ec] blur-xs opacity-80" />
      <button aria-label="close" className="ml-auto self-start w-[47px] h-[18px] flex items-center justify-center rounded-b border border-t-0 border-[#9a9a9a] bg-white">
        <svg viewBox="0 0 12 10" className="w-3 h-2.5">
          <path d="M2 1l8 8M10 1L2 9" stroke="#555" strokeWidth="3.500" />
          <path d="M2 1l8 8M10 1L2 9" stroke="#fff" strokeWidth="1.500" />
        </svg>
      </button>
    </header>
    <div className="flex-1 border border-[#6a6a6a] bg-[#f0f0f0] flex flex-col pl-px">
      <button aria-label="expand dialog" className="w-[19px] h-[17px] mt-px rounded-sm border border-[#9a9a9a] bg-[#e4e4e4] flex items-center justify-center">
        <svg viewBox="0 0 14 14" className="size-[14px]">
          <path d="M0 0h14L7 7zM0 7h14l-7 7z" fill="#0000f0" />
        </svg>
      </button>
      <div className="flex gap-0.5 mt-[13px]">
        <DialogBtn name="swap" />
        <DialogBtn name="drill" on />
        <DialogBtn name="holder" />
        <DialogBtn name="rapid" on />
        <DialogBtn name="endpoint" />
        <DialogBtn name="shade" />
        <DialogBtn name="options" className="w-6 ml-[13px]" />
      </div>
      <div className="flex justify-end gap-1 mt-2 pr-[5px]">
        <DialogBtn name="hatch2" />
        <DialogBtn name="hatch3" />
        <DialogBtn name="camera" />
        <DialogBtn name="saveGreen" className="w-6 ml-0.5" />
      </div>
      <div className="flex justify-end gap-[10px] mt-[6px] pr-[5px]">
        <button aria-label="ok" className={clsx(faceBtn, "w-[52px] h-[25px]")}>
          <svg viewBox="0 0 20 20" className="size-5">
            <path d="M2 11l3-2 3 4Q11 5 18 1q-6 8-9 17H7z" fill="#28c010" stroke="#0c7000" strokeWidth=".8" />
          </svg>
        </button>
        <button aria-label="help" className={clsx(faceBtn, "w-[52px] h-[25px]")}>
          <Icon name="helpDark" className="size-5" />
        </button>
      </div>
    </div>
  </section>
)

const OpsPanel = () => {
  const [tab, setTab] = useState("刀具路徑")

  return (
    <section className="relative w-[284px] shrink-0 flex flex-col bg-[#f0f0f0] pt-[3px] pl-0.5 border-r-2 border-[#8c8c94]">
      <header className="h-[18px] shrink-0 flex items-center bg-[#b2b2b2] pl-0.5 pr-1 text-[11px]">
        <h2>操作管理員</h2>
        <button aria-label="panel menu" className={clsx(faceBtn, "ml-auto w-[17px] h-4")}>
          <Caret />
        </button>
        <button aria-label="close panel" className={clsx(faceBtn, "ml-[5px] w-[17px] h-4 font-['Liberation_Mono',monospace] text-xs")}>
          X
        </button>
      </header>
      <div className="h-5 shrink-0 flex items-end border-b border-[#9a9ca8] text-xs">
        {["刀具路徑", "實體"].map((t) => (
          <button
            key={t}
            onClick={() => setTab(t)}
            className={clsx(
              "border-r border-[#8c8e98] px-1 text-left",
              t == tab ? "w-[61px] h-5 bg-white" : "w-[44px] h-[18px] bg-linear-to-b from-[#f4f4f4] to-[#d8d8d8] border-t"
            )}
          >
            {t}
          </button>
        ))}
      </div>
      <div className="h-8 mt-[2px] shrink-0 flex items-center border-y border-[#a4a4a4] mx-0.5 pl-1">
        {"check checkX | tPlay tX | block blob".split(" ").map((n, i) => (
          <Tool key={i} name={n} />
        ))}
        <button className="w-[23px] text-center font-['Liberation_Serif',serif] font-bold text-[15px] text-[#9d9d9d]">G1</button>
        {"tArrow | eraser | helpGray".split(" ").map((n, i) => (
          <Tool key={i} name={n} />
        ))}
      </div>
      <div className="h-8 shrink-0 flex items-center pl-1 mx-0.5">
        {"lock waves lockOpen | down up loop updown | wavesX shapes".split(" ").map((n, i) => (
          <Tool key={i} name={n} />
        ))}
      </div>
      <div className="flex-1 mt-1 ml-0.5 mr-1 mb-1.5 border border-[#828790] bg-white flex flex-col">
        <div className="flex-1 font-['Liberation_Serif',serif] text-[13px] leading-4">
          <div className="flex items-center pl-px">
            <svg viewBox="0 0 8 16" className="w-2 h-4">
              <path d="M.5.500h7v6h-7zM.5 8.500h7v7h-7z" fill="#00f0f0" stroke="#004" />
            </svg>
            <span className="ml-1">Ma</span>
          </div>
          <svg viewBox="0 0 36 126" className="w-9 h-[126px]" aria-hidden="true">
            <path d="M2.500 0v28M2.500 9.500h10M2.500 25.500h10M20.500 36v84h14" fill="none" stroke="#333" strokeDasharray="1 1" />
            <path d="M0 5.500h4v8H0M0 21.500h4v8H0M16.500 36.500h8v8h-8z" fill="#fff" stroke="#999" />
            <path d="M0 9.500h3M0 25.500h3M18 40.500h5" stroke="#345" />
            <path d="M12 14h15M14.500 7v7M19.500 4v10M24.500 8v6" stroke="#0000d0" strokeWidth="2" />
            <g fill="#00f0f0" stroke="#008">
              <circle cx="16" cy="21" r="3" />
              <circle cx="24" cy="21" r="3" />
              <circle cx="16" cy="29" r="3" />
              <circle cx="24" cy="29" r="3" />
            </g>
          </svg>
        </div>
        <div className="h-4 shrink-0 flex items-center bg-[#f0f0f0] px-2 text-[8px] text-[#333]">
          <span>◀</span>
          <div className="flex-1 pl-[20px]">
            <div className="w-[160px] h-[15px] border border-[#9a9a9a] rounded-xs bg-linear-to-b from-[#f4f4f4] to-[#cfcfcf] flex items-center justify-center gap-px">
              <i className="w-0.5 h-2 bg-[#777]" />
              <i className="w-0.5 h-2 bg-[#777]" />
              <i className="w-0.5 h-2 bg-[#777]" />
            </div>
          </div>
          <span>▶</span>
        </div>
      </div>
      <Dialog />
    </section>
  )
}

const Player = () => (
  <div className="h-[31px] shrink-0 flex items-center bg-white">
    <div className="flex gap-0.5">
      {["play", "stop", "first", "rewind", "forward", "last"].map((n) => (
        <button key={n} aria-label={n} className={clsx(faceBtn, "size-[22px]")}>
          <Icon name={n} />
        </button>
      ))}
      <button aria-label="trace" className="ml-[6px] size-[22px] rounded-sm border border-[#3c6c8c] bg-[#a4d0ec] flex items-center justify-center">
        <Icon name="path" />
      </button>
      <button aria-label="run" className={clsx(faceBtn, "size-[22px]")}>
        <Icon name="pin" />
      </button>
    </div>
    <div className="ml-2 w-[83px] self-stretch flex flex-col justify-end">
      <div className="flex justify-between px-1 mb-[5px]">
        <i className="w-px h-1 bg-[#c0c0c0]" />
        <i className="w-px h-1 bg-[#c0c0c0]" />
      </div>
      <input
        type="range"
        aria-label="speed"
        defaultValue={60}
        className="appearance-none w-full h-[14px] bg-transparent [&::-webkit-slider-runnable-track]:h-[3px] [&::-webkit-slider-runnable-track]:border-t [&::-webkit-slider-runnable-track]:border-[#aaa] [&::-webkit-slider-runnable-track]:bg-[#e7eaea] [&::-webkit-slider-thumb]:appearance-none [&::-webkit-slider-thumb]:w-[10px] [&::-webkit-slider-thumb]:h-[14px] [&::-webkit-slider-thumb]:-mt-[9px] [&::-webkit-slider-thumb]:rounded-t-full [&::-webkit-slider-thumb]:border [&::-webkit-slider-thumb]:border-[#707070] [&::-webkit-slider-thumb]:bg-[#ececec]"
      />
    </div>
    <div className="ml-[22px] flex-1 self-stretch flex flex-col">
      <div className="flex justify-between mt-[7px]">
        <i className="w-px h-[5px] bg-black" />
        <i className="w-px h-[5px] bg-black" />
      </div>
      <input
        type="range"
        aria-label="progress"
        defaultValue={415}
        max={1000}
        className="appearance-none w-full h-[18px] bg-transparent [&::-webkit-slider-runnable-track]:h-2 [&::-webkit-slider-runnable-track]:bg-[#963650] [&::-webkit-slider-runnable-track]:border-t-2 [&::-webkit-slider-runnable-track]:border-[#7c4c58] [&::-webkit-slider-thumb]:appearance-none [&::-webkit-slider-thumb]:w-[10px] [&::-webkit-slider-thumb]:h-[17px] [&::-webkit-slider-thumb]:-mt-[6px] [&::-webkit-slider-thumb]:border-x-3 [&::-webkit-slider-thumb]:border-y [&::-webkit-slider-thumb]:border-x-[#ece9d8] [&::-webkit-slider-thumb]:border-y-[#716f64] [&::-webkit-slider-thumb]:bg-[#8c8880]"
      />
    </div>
    <button aria-label="halt" className={clsx(faceBtn, "ml-[14px] size-[22px]")}>
      <Icon name="halt" />
    </button>
    <button aria-label="help" className={clsx(faceBtn, "ml-0.5 size-[22px]")}>
      <Icon name="helpDark" />
    </button>
  </div>
)

// one pass of the tool: x1, y1, x2, y2
const passes = [
  [631, 358, 929, 410],
  [624, 370, 933, 424],
  [617, 381, 935, 437],
  [611, 393, 937, 450],
  [604, 404, 939, 463],
  [597, 416, 942, 476],
  [591, 427, 945, 489],
  [584, 439, 947, 503],
  [577, 450, 949, 515],
  [571, 462, 951, 529],
  [564, 473, 954, 542],
  [558, 485, 956, 555],
]

const Viewport = () => (
  <div className="relative flex-1 bg-black overflow-hidden">
    <svg
      viewBox="329 191 1080 642"
      preserveAspectRatio="xMidYMid slice"
      className="absolute inset-0 size-full"
      shapeRendering="crispEdges"
      fill="none"
      aria-hidden="true"
    >
      <defs>
        <linearGradient id="tool">
          <stop offset="0" stopColor="#6c6c6c" />
          <stop offset=".18" stopColor="#bcbcbc" />
          <stop offset=".8" stopColor="#bcbcbc" />
          <stop offset="1" stopColor="#585858" />
        </linearGradient>
        <radialGradient id="ball" gradientUnits="userSpaceOnUse" cx="940" cy="425" r="38">
          <stop offset=".7" stopColor="#000" stopOpacity="0" />
          <stop offset="1" stopColor="#000" stopOpacity=".5" />
        </radialGradient>
      </defs>
      <path d="M909 338h62v94a31 31 0 01-62 0z" fill="url(#tool)" />
      <path d="M909 432h62a31 31 0 01-62 0z" fill="url(#ball)" />
      <path d="M329 370.500h448M777.500 372v461" stroke="#804000" />
      <path d="M777 371h132M971 371h438M778 191v180" stroke="#804000" strokeWidth="2" />
      <path d="M909 371h62" stroke="#b08c68" strokeWidth="2" />
      <g stroke="#963650">
        {passes.map(([x1, y1, x2, y2]) => (
          <line key={y1} x1={x1} y1={y1} x2={x2} y2={y2} />
        ))}
        <path d="M689.500 292v63M689 355q-10 3-17 17L617 495M652 350l262 46" />
      </g>
      <path d="M616.500 191v304M689.500 191v101" stroke="#ff0" />
      <g stroke="#0f0">
        <path d="M437.500 470L1063.500 579.500V782.500H437.500z" />
        <path d="M654 349l247 43.500" />
        <path d="M654 349l-73 126q-12 18-28 14" />
        <path d="M715 361l-50 130q-4 14-13 16" />
        <path d="M777 371l-26 154" />
        <path d="M839.500 382v138q1 17 8 21" />
        <path d="M901 392l26 145q6 16 21 22M927 537l3 19" />
        <path d="M581 474l345 61M580 479l348 60" />
      </g>
      <path d="M369.500 774v19" stroke="#00f" />
      <path d="M370 793.500h19" stroke="#f00" />
      <path d="M1289.500 809.500h96M1289.500 797v24M1385.500 798v24" stroke="#ff0" />
    </svg>
    <span className="absolute left-[36px] bottom-[61px] text-sm leading-[18px] text-[#0000ff]">Z</span>
    <span className="absolute left-[66px] bottom-[31px] text-sm leading-[18px] text-[#ff0000]">X</span>
    <p className="absolute left-[6px] bottom-[7px] flex gap-[10px] text-xs leading-[18px] text-[#c8c8c8]">
      <span>螢幕視角:前視圖</span>
      <span>WCS:俯視圖</span>
      <span>刀具 / 構圖面:前視圖</span>
    </p>
    <p className="absolute right-[58px] bottom-[8px] w-[38px] text-xs leading-4 text-[#c8c8c8]">
      <span className="block text-[#00ff00]">15.327</span>
      公制
    </p>
  </div>
)

const statusBtn = "h-5 leading-[18px] rounded-sm border border-[#b4b4b4] bg-linear-to-b from-[#fafafa] to-[#e4e4e4] text-center whitespace-nowrap shrink-0"

const StatusBar = () => (
  <footer className="h-[28px] shrink-0 flex items-center border-t-2 border-[#8c8c8c] bg-[#f0ecec] text-xs pl-0.5 overflow-hidden">
    <span>說明， 請按 Alt+H.</span>
    <div className="ml-auto flex items-center shrink-0">
      <button className={clsx(statusBtn, "w-6")}>3D</button>
      <button className={clsx(statusBtn, "w-[62px] ml-[6px]")}>螢幕視角</button>
      <button className={clsx(statusBtn, "w-[27px] ml-[6px]")}>平面</button>
      <label htmlFor="depth" className={clsx(statusBtn, "w-[14px] ml-[4px]")}>Z</label>
      <span className="w-[92px] h-6 pl-[3px] bg-white flex items-center">
        <span className="w-[70px] h-5 bg-[#ffff80] flex items-center">
          <input id="depth" defaultValue="0.0" className="w-[18px] h-[18px] bg-[#3399ff] text-white" />
        </span>
        <button aria-label="depth history" className="flex-1 flex justify-center">
          <Caret />
        </button>
      </span>
      <button className="ml-[4px] w-8 h-[18px] bg-[#00ff00]">10</button>
      <button aria-label="color list" className="w-[15px] h-[18px] border border-[#a0a0a0] bg-[#f0f0f0] flex items-center justify-center">
        <svg viewBox="0 0 9 9" className="size-[9px]">
          <path d="M0 0h9L4.500 9z" />
        </svg>
      </button>
      <label htmlFor="level" className={clsx(statusBtn, "w-[27px] ml-[6px]")}>層別</label>
      <span className="relative ml-0.5 flex">
        <select id="level" className="appearance-none w-[108px] h-6 pl-1 bg-white">
          <option>1</option>
        </select>
        <Caret className="absolute right-1 top-2.5" />
      </span>
      <button className={clsx(statusBtn, "w-8 ml-[6px]")}>屬性</button>
      <button aria-label="point style" className="w-[37px] h-6 ml-[5px] pl-1 pr-1 bg-white flex items-center justify-between">
        <svg viewBox="0 0 10 10" className="size-[10px]">
          <path d="M5 0v10M0 5h10M1 9l8-8" stroke="#000" />
        </svg>
        <Caret />
      </button>
      <button aria-label="line width" className="w-[63px] h-6 ml-1 pl-0.5 pr-1 bg-white flex items-center justify-between">
        <i className="w-[42px] h-[3px] bg-black" />
        <Caret />
      </button>
      <button aria-label="line style" className="w-[69px] h-6 ml-[5px] pl-0.5 pr-1 bg-white flex items-center justify-between">
        <i className="w-[48px] h-px bg-black" />
        <Caret />
      </button>
      <button className={clsx(statusBtn, "w-[41px] ml-[6px]")}>WCS</button>
      <button className={clsx(statusBtn, "w-[38px] ml-[6px]")}>群組</button>
      <button className={clsx(statusBtn, "w-[12px] ml-[6px]")}>!</button>
      <button className={clsx(statusBtn, "w-[12px] ml-[4px]")}>?</button>
    </div>
  </footer>
)

const TaskBtn = ({ label, active, children }: { label: string; active?: boolean; children: ReactNode }) => (
  <button
    aria-label={label}
    className={clsx(
      "relative w-[59px] h-[38px] rounded-sm border border-[#1c4060] shadow-[inset_0_0_0_1px_rgba(255,255,255,.45)] flex items-center justify-center shrink-0",
      active ? "bg-linear-to-br from-[#e8f4fa] to-[#9cc8e0]" : "bg-linear-to-br from-[#9ccce8] to-[#3a8cc0]"
    )}
  >
    <svg viewBox="0 0 32 32" className="size-8">
      {children}
    </svg>
  </button>
)

const TaskBar = () => (
  <footer className="relative h-[39px] shrink-0 flex items-center gap-[3px] border-t border-[#123a5c] overflow-hidden bg-linear-to-r from-[#1d78b4] via-[#2275bc] via-55% to-[#1c58a0]">
    <i className="absolute left-[340px] top-0 w-[460px] h-full bg-linear-to-r from-transparent via-[#3fa4d4] to-transparent" />
    <i className="absolute right-0 top-0 w-[310px] h-full bg-linear-to-r from-transparent via-[#16366a] via-20% to-[#12305a]" />
    <i className="absolute left-[1050px] -top-3 w-2.5 h-16 -rotate-[38deg] bg-[#a8d0f4] blur-[2px]" />
    <button aria-label="start" className="relative w-[54px] flex justify-center shrink-0">
      <svg viewBox="0 0 36 36" className="size-9">
        <defs>
          <radialGradient id="orb" cy=".95">
            <stop offset="0" stopColor="#30e0ff" />
            <stop offset=".6" stopColor="#1a5c90" />
            <stop offset="1" stopColor="#5c84a4" />
          </radialGradient>
        </defs>
        <circle cx="18" cy="18" r="17" fill="url(#orb)" stroke="#163c5c" />
        <path d="M4 12Q18-4 32 12q-14 8-28 0z" fill="#fff" opacity=".35" />
        <path d="M10 10q4-3 8-1l-2 8q-4-2-8 1z" fill="#f05a20" />
        <path d="M19 10q4 2 9 0l-2 8q-5 2-9 0z" fill="#80c030" />
        <path d="M8 19q4-3 8-1l-2 8q-4-2-8 1z" fill="#4aa8f0" />
        <path d="M17 19q4 2 9 0l-2 8q-5 2-9 0z" fill="#fcc820" />
      </svg>
    </button>
    <button aria-label="Internet Explorer" className="relative w-[61px] flex justify-center shrink-0">
      <svg viewBox="0 0 32 32" className="size-8">
        <path d="M26 21a10 10 0 11.500-6H10" fill="none" stroke="#58c8f4" strokeWidth="5" />
        <path d="M28 12q5-14-8-9Q8 8 3 21q-4 13 8 8" fill="none" stroke="#f8c820" strokeWidth="2.500" />
      </svg>
    </button>
    <TaskBtn label="Chrome">
      <circle cx="16" cy="16" r="14" fill="#f0c020" />
      <path d="M16 16L3.900 9a14 14 0 0010 21l5-8z" fill="#2aa050" />
      <path d="M3.900 9A14 14 0 0128.100 9H16l-6 7z" fill="#dc4434" />
      <circle cx="16" cy="16" r="7" fill="#fff" />
      <circle cx="16" cy="16" r="5.500" fill="#3c7cf0" />
    </TaskBtn>
    <TaskBtn label="Sticky notes">
      <path d="M1 4l14-2 2 16-10 4z" fill="#8cd070" />
      <path d="M7 10l13-5 4 16-14 6z" fill="#a8d8f4" />
      <path d="M13 13l14-6 5 14-5 6-8 2z" fill="#fce468" />
    </TaskBtn>
    <TaskBtn label="Explorer">
      <path d="M2 4l2-3h8l2 3h14l2 4v20H2z" fill="#f4d878" stroke="#c8a030" />
      <path d="M5 4h8M14 6h8M20 9h8" stroke="#fff" strokeWidth="3" />
      <path d="M5 4h3" stroke="#20a020" strokeWidth="3" />
      <path d="M14 6h3" stroke="#e04020" strokeWidth="3" />
      <path d="M21 9h3" stroke="#2080e0" strokeWidth="3" />
      <path d="M6 31V22q0-2 2-2h16q2 0 2 2v9h-5v-5H11v5z" fill="#8cc8ec" stroke="#4a90c0" />
    </TaskBtn>
    <TaskBtn label="Mastercam" active>
      <path d="M0 5h8l5 8 4-8h6l-7 13 5 11h-8l-4-7-4 9H0l6-14z" fill="#2c2c2c" />
      <path d="M2 5l14 24M17 6L4 31" stroke="#b4b4b4" strokeWidth="2" />
      <path d="M31 3H21v5q8-1 8 3t-8 4" fill="none" stroke="#a82020" strokeWidth="4" />
    </TaskBtn>
    <div className="relative ml-auto flex items-center gap-2 text-white text-xs shrink-0">
      <span className="font-['Liberation_Serif',serif] text-[13px] leading-8 self-start">EN</span>
      <span className="self-start mt-2 size-[14px] rounded-full border border-[#c0c8f0] bg-[#1020a0] text-[11px] leading-3 text-center font-bold">?</span>
      <svg viewBox="0 0 110 22" className="w-[110px] h-[22px]">
        <path d="M11 1h5v4h-5zM8 4h5v4H8z" fill="#123" stroke="#fff" />
        <path d="M46 9h3l4-4v12l-4-4h-3zM56 7q3 4 0 8M59 5q4 6 0 12" fill="none" stroke="#fff" />
        <path d="M71 4v14M72 5h6l1 1h5v6h-6l-1-1h-5z" fill="#fff" stroke="#fff" />
        <path d="M96 5h11v8H96zM101 13v4h4M94 4v4" fill="none" stroke="#fff" />
      </svg>
      <div className="text-center leading-[19px] w-[68px]">
        <time className="block whitespace-nowrap">上午 01:04</time>
        <time className="block whitespace-nowrap">2017/10/1</time>
      </div>
      <i className="w-[15px] h-[38px] border border-[#6c88a4] bg-[#2c4c74]" />
    </div>
    <a
      href="#portal"
      className="absolute right-[19px] bottom-1 font-['DejaVu_Sans','Noto_Sans_CJK_SC',sans-serif] font-bold text-base leading-4 whitespace-nowrap text-[#e02020] [text-shadow:1px_0_#fff,-1px_0_#fff,0_1px_#fff,0_-1px_#fff]"
    >
      三维网www.3dportal.cn
    </a>
  </footer>
)

const App = () => (
  <div className="h-screen w-full flex flex-col overflow-hidden bg-[#f0f0f0] text-black font-['Open_Sans','Noto_Sans_CJK_TC',sans-serif]">
    <TitleBar />
    <Toolbars />
    <main className="flex-1 min-h-0 flex border-t border-white">
      <LeftBar />
      <OpsPanel />
      <div className="flex-1 min-w-0 flex flex-col">
        <Player />
        <Viewport />
      </div>
      <RightBar />
    </main>
    <StatusBar />
    <TaskBar />
  </div>
)

export default App
